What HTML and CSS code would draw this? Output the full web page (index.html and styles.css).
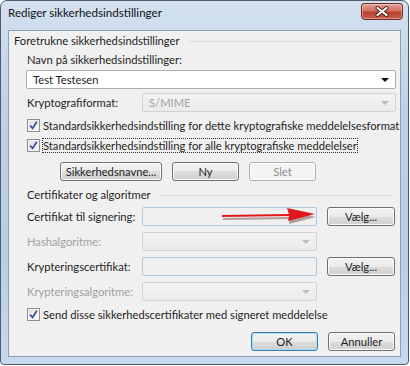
FILE: index.html
```html
<!DOCTYPE html>
<html lang="da">
<head>
  <meta charset="UTF-8">
  <title>Rediger sikkerhedsindstillinger</title>
  <link rel="stylesheet" href="styles.css">
</head>
<body>

<div class="window">
  <div class="titlebar">
    <span class="title">Rediger sikkerhedsindstillinger</span>
    <div class="close">
      <svg width="14" height="11" viewBox="0 0 14 11">
        <path d="M2.5 2 L11.5 9 M11.5 2 L2.5 9" stroke="#4a2020" stroke-width="4" stroke-linecap="round"/>
        <path d="M2.5 2 L11.5 9 M11.5 2 L2.5 9" stroke="#fff" stroke-width="2.2" stroke-linecap="round"/>
      </svg>
    </div>
  </div>

  <div class="client">
    <div class="group-head"><span>Foretrukne sikkerhedsindstillinger</span></div>

    <div class="section">
      <div class="label">Navn på sikkerhedsindstillinger:</div>
      <div class="combo">Test Testesen<span class="arrow"></span></div>

      <div class="row">
        <span class="row-label">Kryptografiformat:</span>
        <div class="combo disabled wide">S/MIME<span class="arrow"></span></div>
      </div>

      <div class="check first">
        <span class="box"><svg width="9" height="9" viewBox="0 0 9 9"><path d="M1.2 4.6 L3.6 7.4 L7.8 0.8" fill="none" stroke="#2f4f9c" stroke-width="1.7"/></svg></span>
        <span>Standardsikkerhedsindstilling for dette kryptografiske meddelelsesformat</span>
      </div>
      <div class="check">
        <span class="box"><svg width="9" height="9" viewBox="0 0 9 9"><path d="M1.2 4.6 L3.6 7.4 L7.8 0.8" fill="none" stroke="#2f4f9c" stroke-width="1.7"/></svg></span>
        <span class="focus">Standardsikkerhedsindstilling for alle kryptografiske meddelelser</span>
      </div>

      <div class="btn-row">
        <button class="btn names">Sikkerhedsnavne...</button>
        <button class="btn">Ny</button>
        <button class="btn" disabled>Slet</button>
      </div>
    </div>

    <div class="group-head second"><span>Certifikater og algoritmer</span></div>

    <div class="cert-grid">
      <span class="row-label">Certifikat til signering:</span>
      <div class="field"></div>
      <button class="btn">Vælg...</button>

      <span class="row-label dim">Hashalgoritme:</span>
      <div class="combo disabled"><span class="arrow"></span></div>
      <span></span>

      <span class="row-label">Krypteringscertifikat:</span>
      <div class="field"></div>
      <button class="btn">Vælg...</button>

      <span class="row-label dim">Krypteringsalgoritme:</span>
      <div class="combo disabled"><span class="arrow"></span></div>
      <span></span>

      <svg class="pointer" width="100" height="20" viewBox="0 0 100 20">
        <path d="M3 10.5 L70 9.5 L68 3.5 L96 9.5 L69 16.5 L70 11.5 L3 12.5 Z" fill="#3a0000" opacity="0.35" transform="translate(1 1.5)"/>
        <path d="M3 9 L70 8 L68 2 L96 8 L69 15 L70 10 L3 11 Z" fill="#e0181c"/>
      </svg>
    </div>

    <div class="check send">
      <span class="box"><svg width="9" height="9" viewBox="0 0 9 9"><path d="M1.2 4.6 L3.6 7.4 L7.8 0.8" fill="none" stroke="#2f4f9c" stroke-width="1.7"/></svg></span>
      <span>Send disse sikkerhedscertifikater med signeret meddelelse</span>
    </div>

    <div class="footer">
      <button class="btn default">OK</button>
      <button class="btn">Annuller</button>
    </div>
  </div>
</div>

</body>
</html>
```

FILE: styles.css
```css
* {
  box-sizing: border-box;
}

body {
  margin: 0;
  background: #fff;
  font-family: 'Lato', sans-serif;
  font-size: 11.2px;
  color: #1e1e1e;
}

.window {
  width: 409px;
  height: 365px;
  border: 1px solid #4f5b6b;
  border-radius: 7px 7px 4px 4px;
  background: linear-gradient(#d3e1f0, #bed1e6 30%, #b9cde3 70%, #c6d9ee);
  padding: 0 7px 7px 7px;
  display: flex;
  flex-direction: column;
}

.titlebar {
  height: 29px;
  display: flex;
  justify-content: space-between;
  align-items: flex-start;
}

.title {
  padding-top: 5px;
  color: #111;
  font-size: 11.6px;
}

.close {
  width: 42px;
  height: 17px;
  margin-top: 2px;
  margin-right: -2px;
  border: 1px solid #6b2b24;
  border-radius: 3px 3px 4px 4px;
  background: linear-gradient(#e6a095, #d0725f 45%, #b9402d 55%, #c6604b);
  box-shadow: inset 0 0 0 1px rgba(255, 255, 255, 0.35);
  display: flex;
  align-items: center;
  justify-content: center;
}

.client {
  flex: 1;
  background: #f0f0f0;
  border: 1px solid #8da0b8;
  padding: 2px 4px 0 5px;
}

.group-head {
  height: 16px;
  line-height: 16px;
  display: flex;
  align-items: center;
  gap: 8px;
}

.group-head::after {
  content: '';
  flex: 1;
  height: 1px;
  background: #d5dfe5;
  margin-right: 3px;
}

.group-head.second {
  margin-top: 6px;
  padding-left: 13px;
}

.section {
  padding-left: 12px;
}

.label {
  height: 16px;
  line-height: 16px;
  margin-top: 3px;
  padding-left: 1px;
}

.combo {
  position: relative;
  height: 19px;
  line-height: 17px;
  margin-top: 2px;
  padding-left: 6px;
  background: #fff;
  border: 1px solid #abadb3;
  border-radius: 2px;
}

.combo .arrow {
  position: absolute;
  right: 6px;
  top: 7px;
  border-left: 4px solid transparent;
  border-right: 4px solid transparent;
  border-top: 4px solid #111;
}

.combo.disabled {
  background: linear-gradient(#f3f3f3, #ebebeb);
  border-color: #d2d2d2;
  color: #a3a3a3;
  margin-top: 0;
}

.combo.disabled .arrow {
  border-top-color: #bcbcbc;
}

.row {
  display: flex;
  align-items: center;
  margin-top: 4px;
}

.row .row-label {
  width: 116px;
  padding-left: 1px;
}

.combo.wide {
  flex: 1;
}

.check {
  height: 16px;
  display: flex;
  align-items: center;
  gap: 3px;
  margin-top: 4px;
  padding-left: 1px;
  white-space: nowrap;
}

.check.first {
  margin-top: 5px;
}

.check .box {
  flex: none;
  width: 13px;
  height: 13px;
  border: 1px solid #8e8f8f;
  background: linear-gradient(135deg, #dcdcdc, #fdfdfd);
  box-shadow: inset 0 0 0 1px #f4f4f4;
  display: flex;
  align-items: center;
  justify-content: center;
}

.focus {
  outline: 1px dotted #333;
  outline-offset: 0;
}

.btn {
  height: 19px;
  padding: 0;
  font-family: inherit;
  font-size: 11.2px;
  color: #1e1e1e;
  border: 1px solid #707070;
  border-radius: 3px;
  background: linear-gradient(#f2f2f2, #ebebeb 50%, #dddddd 50%, #cfcfcf);
  box-shadow: inset 0 0 0 1px #fcfcfc;
}

.btn:disabled {
  color: #8d8d8d;
  border-color: #adb2b5;
  background: #f4f4f4;
}

.btn-row {
  display: flex;
  gap: 10px;
  margin-top: 9px;
  padding-left: 34px;
}

.btn-row .btn {
  width: 67px;
}

.btn-row .btn.names {
  width: 102px;
}

.cert-grid {
  position: relative;
  display: grid;
  grid-template-columns: 105px 175px 68px;
  grid-auto-rows: 19px;
  column-gap: 10px;
  row-gap: 6px;
  align-items: center;
  margin-top: 4px;
  padding-left: 13px;
  white-space: nowrap;
}

.cert-grid .combo {
  margin-top: 0;
}

.dim {
  color: #a0a0a0;
}

.field {
  height: 19px;
  border: 1px solid #b5c8dc;
  border-radius: 2px;
  background: #f0f0f0;
}

.pointer {
  position: absolute;
  left: 205px;
  top: -1px;
}

.check.send {
  margin-top: 5px;
  padding-left: 13px;
}

.footer {
  display: flex;
  justify-content: flex-end;
  gap: 10px;
  margin-top: 10px;
  padding-right: 1px;
}

.footer .btn {
  width: 67px;
  height: 19px;
}

.btn.default {
  border-color: #3c7fb1;
  box-shadow: inset 0 0 0 1px #a6dcf5;
}
```
